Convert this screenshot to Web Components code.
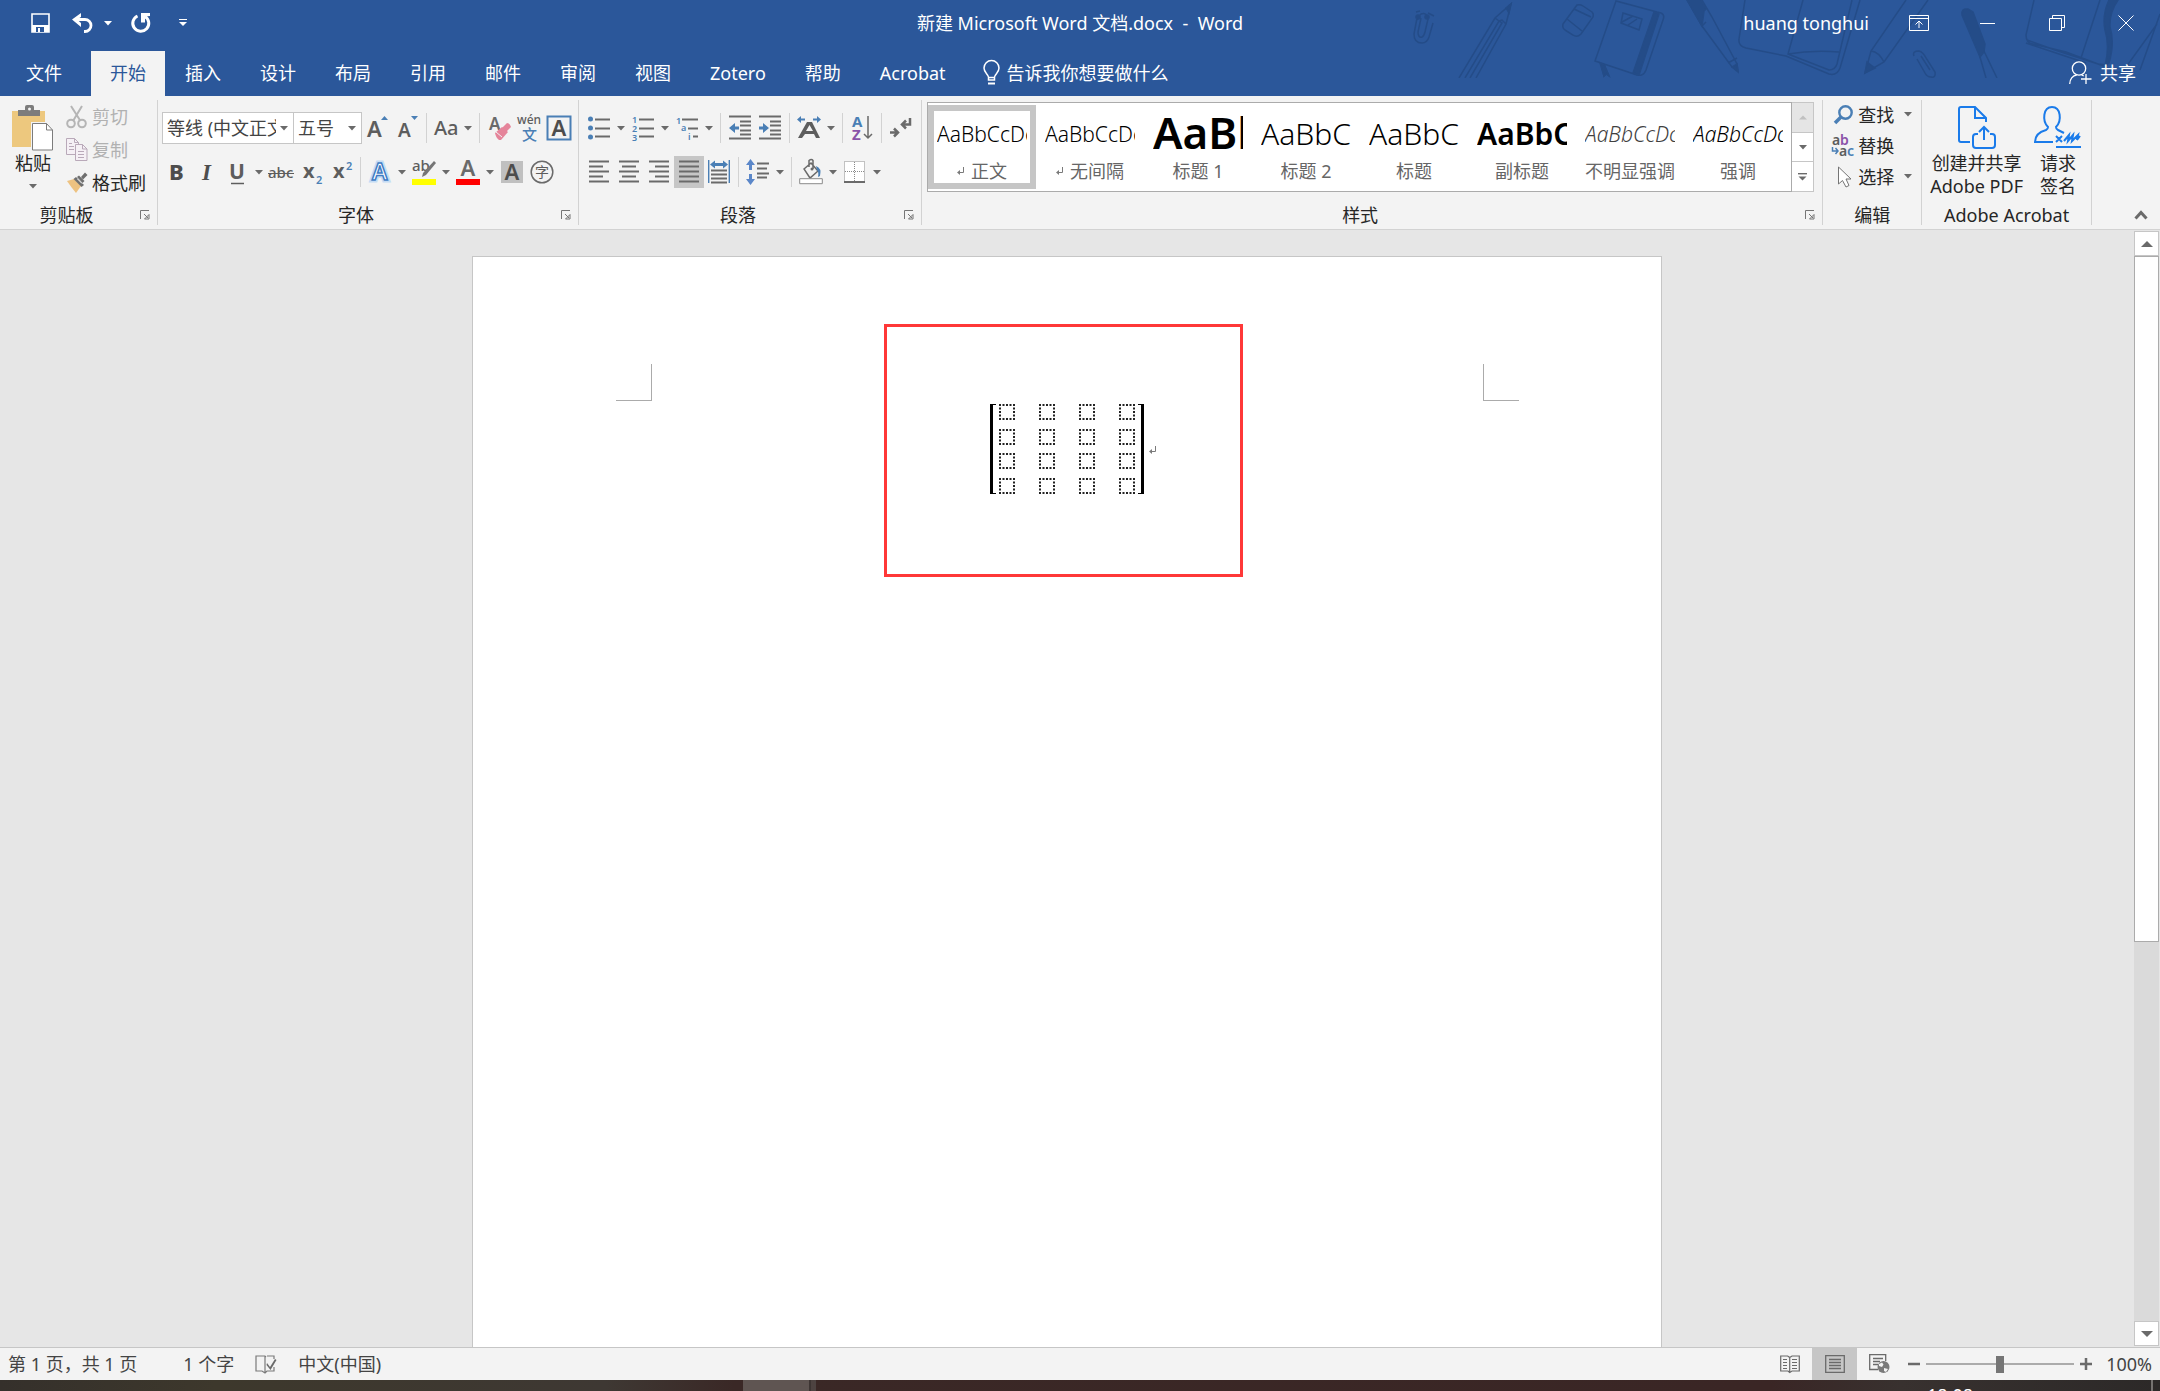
<!DOCTYPE html>
<html lang="zh-CN">
<head>
<meta charset="utf-8">
<title>新建 Microsoft Word 文档.docx - Word</title>
<style>
    body {
        margin: 0;
        font: 18px/24px "Noto Sans", "Noto Sans CJK SC", sans-serif;
        color: #262626;
    }
</style>
</head>
<body>
<word-app></word-app>

<script>
const INK = '#6a6a6a'
const BLUE = '#4a7fb5'

const lines = (rows) => rows.map(([x, y, w]) => `<path d="M${x} ${y + 0.5}h${w}" stroke="${INK}" stroke-width="2"/>`).join('')
const textAlign = (xs) => lines(xs.map(([x, w], i) => [x, i * 5, w]))

// name: [width, height, markup]
const ICONS = {
    caret: [8, 5, '<path d="M0 0h8L4 4.5z" fill="currentColor"/>'],
    save: [20, 20, '<path d="M1 1h17v18H1z" fill="none" stroke="#fff" stroke-width="1.6"/><path d="M1 12h17v7H1z" fill="#fff"/><path d="M5 14h8v5H5z" fill="#2b579a"/><path d="M7 15h2v4H7z" fill="#fff"/>'],
    undo: [23, 20, '<path d="M3 6.500h10a6 6 0 0 1 0 12h-1" fill="none" stroke="#fff" stroke-width="2.800"/><path d="M9 0v4L5 6.500l4 3.500v4L0 6.500z" fill="#fff"/>'],
    redo: [22, 20, '<path d="M7.500 3A8 8 0 1 0 15 3.500" fill="none" stroke="#fff" stroke-width="3"/><path d="M11 0h9v3l-5 .5v6h-4z" fill="#fff"/>'],
    more: [8, 8, '<path d="M0 .5h8" stroke="#fff"/><path d="M0 3h8L4 7z" fill="#fff"/>'],
    display: [20, 16, '<path d="M.5.5h19v15H.5zM.5 3.500h19M10 13V6M6.500 9.500 10 6l3.500 3.500" fill="none" stroke="#fff"/>'],
    minimize: [16, 16, '<path d="M0 8.500h15" stroke="#fff"/>'],
    restore: [16, 16, '<path d="M.5 3.500h12v12H.5zM3.500 3V.5h12v12H13" fill="none" stroke="#fff"/>'],
    close: [16, 16, '<path d="m.5.5 15 15m0-15-15 15" stroke="#fff"/>'],
    bulb: [18, 26, '<path d="M5.500 20v-3C5 14 1 12.500 1 8a7.500 7.500 0 0 1 15 0c0 4.500-4 6-4.500 9v3zM5.500 17.500h6" fill="none" stroke="#fff" stroke-width="1.500"/><path d="M5 23.500h7" stroke="#fff" stroke-width="2"/>'],
    share: [23, 24, '<circle cx="10" cy="7.500" r="6.700" fill="none" stroke="#fff" stroke-width="1.300"/><path d="M.7 23c0-5 3-8.500 7-9m5 0 2 .8M17 13v10m-5-5h10.500" fill="none" stroke="#fff" stroke-width="1.300"/>'],

    paste: [42, 46, '<path d="M0 6h33v36H0z" fill="#edc87e"/><path d="M6 5h7V2q0-2 2-2h5q2 0 2 2v3h6v6H6z" fill="#7c7c7c"/><circle cx="17.500" cy="4" r="1.500" fill="#f3f3f3"/><path d="M19 17h17l6 7v22H19z" fill="#f3f3f3"/><path d="M20.500 18.500h14l6 6.500v20h-20z" fill="#fff" stroke="#7c7c7c"/><path d="M34.500 18.500V25h6" fill="none" stroke="#7c7c7c"/>'],
    cut: [22, 24, '<g fill="none" stroke="#b5b5b5" stroke-width="2"><path d="m5 1 9.500 15M16 1 7 16"/><circle cx="5" cy="18.500" r="3.800"/><circle cx="16" cy="18.500" r="3.800"/></g>'],
    copy: [22, 24, '<g fill="#f5f0f5" stroke="#b9a9b9"><path d="M.5.5h8l4 4v12H.5z"/><path d="M9.500 6.500h7l4.500 4.500v11.500H9.500z"/><path d="M8.500.5v4h4m4 2V11h4.500M3 5.500h3M3 8.500h5M3 11.500h5m4 2h6m-6 3h6m-6 3h6" fill="none"/></g>'],
    brush: [22, 22, '<path d="m1 9 7-2 7 7-5 7q-5-6-9-12z" fill="#edc281"/><path d="m10 5 8 8-2.500 2L7.500 7zM15 5l4-4.500L21.500 3 17 7.500z" fill="#6f6f6f"/><path d="m13 3.500 5.500 5.500-2 2L11 5z" fill="#6f6f6f"/><path d="m11.500 7 4.500 4.500" stroke="#f3f3f3"/>'],

    grow: [22, 28, `<text x="1" y="23" font-size="22" font-weight="600" fill="#5d5d5d">A</text><path d="m15 6 3.500-4L22 6z" fill="${BLUE}"/>`],
    shrink: [22, 28, `<text x="2" y="23" font-size="19" font-weight="600" fill="#5d5d5d">A</text><path d="m15 2 3.500 4L22 2z" fill="${BLUE}"/>`],
    caseAa: [28, 26, '<text x="2" y="20" font-size="20" font-weight="500" fill="#5d5d5d">Aa</text>'],
    erase: [24, 26, '<text x="2" y="15" font-size="17" font-weight="600" fill="#6a6a6a">A</text><path d="m15 13 5-5q3 0 4 4l-6 6z" fill="#e5849a"/><path d="m8 18 7-6 6 5-7 8h-2q-3-2-4-7z" fill="#e5849a"/><path d="m9 17 6 5" stroke="#f3f3f3"/>'],
    phonetic: [24, 28, `<text x="0" y="10" font-size="12" font-weight="500" fill="#5d5d5d">wén</text><text x="5" y="26" font-size="15" font-weight="500" fill="${BLUE}">文</text>`],
    charBorder: [24, 24, `<path d="M.5.5h23v23H.5z" fill="none" stroke="${BLUE}" stroke-width="2"/><text x="12" y="20" text-anchor="middle" font-size="22" font-weight="600" fill="#4d4d4d">A</text>`],
    bold: [20, 24, '<text x="2" y="20" font-size="22" font-weight="800" fill="#4d4d4d">B</text>'],
    italic: [20, 24, '<text x="5" y="20" font-size="23" font-family="Liberation Serif, serif" font-weight="700" font-style="italic" fill="#4d4d4d">I</text>'],
    underline: [20, 26, '<text x="2" y="20" font-size="21" font-weight="700" fill="#5d5d5d">U</text><path d="M4 24.500h13" stroke="#5d5d5d" stroke-width="1.500"/>'],
    strike: [26, 24, '<text x="0" y="18" font-size="15" font-weight="500" fill="#5d5d5d">abc</text><path d="M0 13.500h26" stroke="#5d5d5d"/>'],
    sub: [24, 28, `<text x="4" y="20" font-size="20" font-weight="700" fill="#5d5d5d">x</text><text x="17" y="26" font-size="11" font-weight="600" fill="${BLUE}">2</text>`],
    sup: [24, 28, `<text x="4" y="20" font-size="20" font-weight="700" fill="#5d5d5d">x</text><text x="17" y="12" font-size="11" font-weight="600" fill="${BLUE}">2</text>`],
    effect: [22, 24, '<text x="3" y="20" font-size="23" font-weight="600" fill="#fff" stroke="#c5dcf4" stroke-width="5">A</text><text x="3" y="20" font-size="23" font-weight="600" fill="#fff" stroke="#3f7cc4" stroke-width="1.500">A</text>'],
    highlight: [24, 28, '<text x="0" y="13" font-size="15" font-weight="500" fill="#5d5d5d">ab</text><path d="m22 3 2 2-10 12-4 2 1-4z" fill="#757575"/><path d="M0 21h24v6H0z" fill="#ff0"/>'],
    fontColor: [24, 28, '<text x="12" y="18" text-anchor="middle" font-size="22" font-weight="600" fill="#6a6a6a">A</text><path d="M0 21h24v6H0z" fill="red"/>'],
    shade: [22, 22, '<path d="M0 0h22v22H0z" fill="#c0c0c0"/><text x="11" y="19" text-anchor="middle" font-size="22" font-weight="600" fill="#4d4d4d">A</text>'],
    circled: [24, 24, '<circle cx="12" cy="12" r="10.800" fill="none" stroke="#6a6a6a" stroke-width="1.500"/><text x="5" y="17" font-size="14" fill="#5d5d5d">字</text>'],

    bullets: [22, 22, [2, 11, 20].map(y => `<circle cx="2.500" cy="${y}" r="2.500" fill="${BLUE}"/>`).join('') + lines([[7, 2, 15], [7, 11, 15], [7, 19, 15]])],
    numbers: [22, 24, [1, 2, 3].map(n => `<text x="0" y="${n * 9 - 2}" font-size="9" font-weight="600" fill="${BLUE}">${n}</text>`).join('') + lines([[7, 3, 15], [7, 12, 15], [7, 20, 15]])],
    levels: [23, 24, `<g font-size="9" font-weight="600" fill="${BLUE}"><text x="0" y="8">1</text><text x="5" y="15">a</text><text x="12" y="24">i</text></g>` + lines([[6, 3, 16], [12, 12, 10], [17, 20, 5]])],
    outdent: [22, 24, lines([[0, 0, 22], [11, 5, 11], [11, 9, 11], [11, 14, 11], [11, 18, 11], [0, 22, 22]]) + `<path d="M0 12l6-5v3.500h4v3H6V17z" fill="${BLUE}"/>`],
    indent: [22, 24, lines([[0, 0, 22], [11, 5, 11], [11, 9, 11], [11, 14, 11], [11, 18, 11], [0, 22, 22]]) + `<path d="M10 12 4 7v3.500H0v3h4V17z" fill="${BLUE}"/>`],
    scale: [24, 24, `<path d="M0 3.500 4 0v2.500h4v2H4V7zM24 3.500 20 0v2.500h-4v2h4V7z" fill="${BLUE}"/><path d="M1 22 10 6h5l8 16h-4l-2-4H8l-3 4zm8-7h7l-3.500-6z" fill="#5d5d5d"/>`],
    sort: [20, 26, `<g font-size="15" font-weight="700"><text x="0" y="12" fill="${BLUE}">A</text><text x="0" y="25" fill="#8a52a8">Z</text></g><path d="M16 1v22m-4-4 4 4 4-4" fill="none" stroke="${INK}" stroke-width="1.500"/>`],
    marks: [22, 20, '<path d="M20 0v6.500h-8m4-4-4 4 4 4M0 14.500h8m-4-4 4 4-4 4" fill="none" stroke="#6a6a6a" stroke-width="2.500"/>'],
    left: [20, 22, textAlign([[0, 20], [0, 14], [0, 20], [0, 14], [0, 20]])],
    center: [20, 22, textAlign([[0, 20], [3, 14], [0, 20], [3, 14], [0, 20]])],
    right: [20, 22, textAlign([[0, 20], [6, 14], [0, 20], [6, 14], [0, 20]])],
    justify: [20, 22, textAlign([[0, 20], [0, 20], [0, 20], [0, 20], [0, 20]])],
    spread: [22, 24, `<path d="M.7 0v23M21.300 0v23" stroke="${BLUE}" stroke-width="1.400"/><path d="m2 4.500 5-4V3h8V.5l5 4-5 4V6H7v2.500z" fill="${BLUE}"/>` + lines([[3, 10, 16], [3, 14, 16], [3, 18, 16], [3, 22, 16]])],
    spacing: [24, 26, `<path d="m4.500 0 4.500 6H6v5H3V6H0zM4.500 26 0 20h3v-5h3v5h3z" fill="#5b87c9"/>` + lines([[11, 4, 12], [11, 9, 10], [11, 14, 12], [11, 18, 10]])],
    bucket: [24, 26, `<path d="m5 10 7-6 7 8-8 7zM10 8V1.500q2.500-2 4 0V10" fill="none" stroke="#6a6a6a" stroke-width="1.500"/><circle cx="13" cy="10" r="1.500" fill="#6a6a6a"/><path d="M17 7q6 2 4 10l-2 1q1-5-1-7z" fill="${BLUE}"/><path d="M.7 19.700h22.600v5H.7z" fill="#fff" stroke="#8a8a8a"/>`],
    borders: [22, 22, '<path d="M.5.5h20v20H.5zM10.500 1v20M1 10.500h20" fill="#fff" stroke="#8a8a8a" stroke-dasharray="1 1"/><path d="M0 21h21" stroke="#6a6a6a" stroke-width="2"/>'],

    returnMark: [8, 9, '<path d="M6.500 0v5.500H2" fill="none" stroke="#7a7a7a"/><path d="m0 5.500 3-2.500v5z" fill="#7a7a7a"/>'],
    find: [20, 20, `<circle cx="12.500" cy="7.500" r="6.200" fill="none" stroke="${BLUE}" stroke-width="2.400"/><path d="m8 12-6 6" stroke="${BLUE}" stroke-width="3.500"/>`],
    replace: [24, 24, `<g font-size="14" font-weight="600"><text x="1" y="11" fill="#5d5d5d">a</text><text x="9" y="11" fill="#8a52a8">b</text><text x="8" y="22" fill="#5d5d5d">a</text><text x="16" y="22" fill="${BLUE}">c</text></g><path d="M1.500 13v4H7m-2.500-3L7 17l-2.500 3" fill="none" stroke="${BLUE}" stroke-width="1.500"/>`],
    select: [20, 22, '<path d="M5.500 1v17l4-3.500 3.500 6.500 3-1.500-3-6.500h5z" fill="#fff" stroke="#757575"/>'],
    createPdf: [38, 44, '<g fill="none" stroke="#1a7bea" stroke-width="2"><path d="M12 36H3q-2 0-2-2V3q0-2 2-2h14l11 11v4M17 1v11h11M20 28h-2q-3 0-3 3v8q0 3 3 3h16q3 0 3-3v-8q0-3-3-3h-2M26 34V21m-5 5 5-5 5 5"/></g>'],
    sign: [48, 44, '<g fill="none" stroke="#1a7bea" stroke-width="2"><path d="M19 36H1q0-9 11-12 2-1 2-3c-6-6-5-20 4-20s10 14 4 20q0 2 2 3l6 3M22 30l6 6m0-6-6 6m8-1 5-6-1 6 5-6-1 6 6-6-1 5 3-4M22 41h25"/></g>'],
    launcher: [10, 10, '<path d="M.5 9V.5H9M4 4l4 4M9 4.500V9H4.500z" fill="none" stroke="#757575"/>'],
    collapse: [14, 10, '<path d="m1.500 8.500 5.500-6 5.500 6" fill="none" stroke="#6a6a6a" stroke-width="3"/>'],
    up: [12, 6, '<path d="m0 6 6-6 6 6z" fill="currentColor"/>'],
    down: [12, 6, '<path d="m0 0 6 6 6-6z" fill="currentColor"/>'],
    upSmall: [8, 5, '<path d="m0 4.500 4-4 4 4z" fill="currentColor"/>'],
    expand: [9, 8, '<path d="M0 .7h9" stroke="currentColor" stroke-width="1.400"/><path d="M.5 3.500h8l-4 4z" fill="currentColor"/>'],

    proof: [22, 20, '<path d="M10 2H1v15h6l3 2 2-2h7v-4M10 2v17M12 2h7v3M10 2l1 1" fill="none" stroke="#7a7a7a" stroke-width="1.200"/><path d="m12 9 3 4 5-8 1.500 1-6 10-4-5z" fill="#6a6a6a"/>'],
    read: [20, 18, '<path d="M.7 1h7l2 1.500L12 1h7.300v15H12l-2.300 1.500L8 16H.7zM9.700 2v16M3 4.500h4M3 7.500h4M3 10.500h4M3 13.500h4m5-9h5m-5 3h5m-5 3h5m-5 3h5" fill="none" stroke="#6a6a6a" stroke-width="1.200"/>'],
    print: [20, 18, '<path d="M.7.7h18.600v16.600H.7zM4 4.500h12M4 7.500h12M4 10.500h12M4 13.500h12" fill="none" stroke="#6a6a6a" stroke-width="1.300"/>'],
    web: [21, 20, '<path d="M9 15.500H.7V.7h16V7M4 4.500h10M4 7.500h7M4 10.500h5" fill="none" stroke="#6a6a6a" stroke-width="1.300"/><circle cx="14.500" cy="13" r="6" fill="#7a7a7a"/><path d="m10 10 3-1.500 1.500 2-1.500 2.500-3-1zm5 4 4 1-2 3-2-1z" fill="#f3f3f3"/>'],
    minus: [12, 12, '<path d="M0 6h12" stroke="#6a6a6a" stroke-width="2.500"/>'],
    plus: [12, 12, '<path d="M0 6h12M6 0v12" stroke="#6a6a6a" stroke-width="2.500"/>']
}

function define(name, html) {
    customElements.define(name, class extends HTMLElement {
        connectedCallback() {
            if (this.shadowRoot) return
            const shadow = this.attachShadow({ mode: 'open' })
            shadow.innerHTML = typeof html === 'function' ? html(this) : html
        }
    })
}

const resetButton = `
    button {
        margin: 0;
        padding: 0;
        border: 0;
        background: none;
        font: inherit;
        color: inherit;
    }
`

define('ui-icon', (el) => {
    const [w, h, body] = ICONS[el.getAttribute('name')]
    return `
        <style>
            :host { display: inline-flex; flex: none; }
            svg { display: block; overflow: visible; }
        </style>
        <svg width="${w}" height="${h}" viewBox="0 0 ${w} ${h}" aria-hidden="true">${body}</svg>
    `
})

// icon-only button of the ribbon, "menu" adds the drop-down arrow
define('tool-button', (el) => `
    <style>
        ${resetButton}
        :host { display: flex; height: 32px; }
        button { display: flex; align-items: center; justify-content: center; }
        .main { width: 30px; }
        .drop { width: 14px; color: #6a6a6a; }
        :host([active]) .main { background: #c6c6c6; }
    </style>
    <button class="main" aria-label="${el.getAttribute('label')}"><ui-icon name="${el.getAttribute('icon')}"></ui-icon></button>
    ${el.hasAttribute('menu') ? `<button class="drop" aria-label="${el.getAttribute('label')}选项"><ui-icon name="caret"></ui-icon></button>` : ''}
`)

define('tool-divider', `
    <style>
        :host { display: block; width: 1px; height: 30px; margin: 0 4px; background: #d2d2d2; }
    </style>
`)

// button with icon and caption on one line
define('text-button', (el) => `
    <style>
        ${resetButton}
        :host { display: block; }
        button { display: flex; align-items: center; gap: 4px; height: 100%; white-space: nowrap; }
        button:disabled { color: #b1b1b1; }
        .icon { display: flex; width: 22px; justify-content: center; }
        .caret { margin-left: 6px; color: #6a6a6a; }
    </style>
    <button ${el.hasAttribute('disabled') ? 'disabled' : ''}>
        <span class="icon"><ui-icon name="${el.getAttribute('icon')}"></ui-icon></span>
        <slot></slot>
        ${el.hasAttribute('menu') ? '<ui-icon class="caret" name="caret"></ui-icon>' : ''}
    </button>
`)

define('big-button', (el) => `
    <style>
        ${resetButton}
        :host { display: block; }
        button { display: flex; flex-direction: column; align-items: center; gap: 1px; min-width: 50px; line-height: 23px; white-space: nowrap; }
        ui-icon { height: 46px; align-items: center; }
        .caret { height: 20px; color: #6a6a6a; }
    </style>
    <button>
        <ui-icon name="${el.getAttribute('icon')}"></ui-icon>
        <span><slot></slot></span>
        ${el.hasAttribute('menu') ? '<ui-icon class="caret" name="caret"></ui-icon>' : ''}
    </button>
`)

define('combo-box', (el) => `
    <style>
        :host {
            display: flex;
            align-items: center;
            box-sizing: border-box;
            height: 32px;
            padding: 0 5px 0 4px;
            border: 1px solid #c6c6c6;
            background: #fff;
        }
        select {
            flex: 1;
            min-width: 0;
            padding: 0;
            margin-right: 4px;
            border: 0;
            background: none;
            appearance: none;
            font: inherit;
            color: #444;
            text-overflow: clip;
        }
        ui-icon { color: #6a6a6a; }
    </style>
    <select aria-label="${el.getAttribute('label')}"><option>${el.getAttribute('value')}</option></select>
    <ui-icon name="caret"></ui-icon>
`)

define('ribbon-group', (el) => `
    <style>
        ${resetButton}
        :host {
            display: flex;
            flex-direction: column;
            box-sizing: border-box;
            border-right: 1px solid #d2d2d2;
        }
        .body { flex: 1; }
        footer { display: flex; align-items: center; height: 20px; }
        .name { flex: 1; text-align: center; white-space: nowrap; }
        button { display: flex; align-items: center; justify-content: center; width: 24px; height: 20px; }
    </style>
    <div class="body"><slot></slot></div>
    <footer>
        <span class="name">${el.getAttribute('name')}</span>
        ${el.hasAttribute('launcher') ? `<button aria-label="${el.getAttribute('name')}设置"><ui-icon name="launcher"></ui-icon></button>` : ''}
    </footer>
`)

define('style-cell', (el) => `
    <style>
        ${resetButton}
        :host { display: block; flex: none; width: 108px; }
        button {
            display: flex;
            flex-direction: column;
            gap: 2px;
            box-sizing: border-box;
            width: 100%;
            height: 84px;
            padding: 0 3px;
            border: 6px solid transparent;
        }
        :host([active]) button { border-color: #c6c6c6; }
        .preview {
            width: 90px;
            height: 46px;
            overflow: hidden;
            color: #000;
            font-size: 21px;
            font-weight: 300;
            line-height: 46px;
            text-align: left;
            white-space: nowrap;
        }
        .h1 { font-size: 44px; font-weight: 600; line-height: 42px; }
        .h2 { font-size: 30px; }
        .sub { font-size: 30px; font-weight: 600; }
        .em { font-style: italic; }
        .soft { font-style: italic; color: #404040; }
        .name {
            display: flex;
            align-items: center;
            justify-content: center;
            gap: 6px;
            width: 90px;
            color: #666;
            white-space: nowrap;
        }
    </style>
    <button>
        <span class="preview ${el.getAttribute('kind') || ''}">${el.getAttribute('sample')}</span>
        <span class="name">${el.hasAttribute('mark') ? '<ui-icon name="returnMark"></ui-icon>' : ''}<slot></slot></span>
    </button>
`)

define('style-gallery', `
    <style>
        ${resetButton}
        :host { display: flex; height: 90px; }
        .cells {
            display: flex;
            flex: 1;
            box-sizing: border-box;
            min-width: 0;
            overflow: hidden;
            padding: 2px 0;
            border: 1px solid #ababab;
            background: #fff;
        }
        .more { display: flex; flex-direction: column; width: 22px; }
        .more button {
            display: flex;
            flex: 1;
            align-items: center;
            justify-content: center;
            border: solid #c6c6c6;
            border-width: 1px 1px 0 0;
            background: #fff;
            color: #6a6a6a;
        }
        .more button:disabled { background: #e5e5e5; color: #c0c0c0; }
        .more button:last-child { border-bottom-width: 1px; }
    </style>
    <div class="cells"><slot></slot></div>
    <div class="more">
        <button disabled aria-label="上一行"><ui-icon name="upSmall"></ui-icon></button>
        <button aria-label="下一行"><ui-icon name="caret"></ui-icon></button>
        <button aria-label="其他"><ui-icon name="expand"></ui-icon></button>
    </div>
`)

define('header-art', `
    <style>
        :host { position: absolute; top: 0; right: 0; }
        svg { display: block; }
    </style>
    <svg width="760" height="78" viewBox="0 0 760 78" fill="none" stroke="#244c88" stroke-width="1.500" aria-hidden="true">
        <path d="M17 18 14 34q0 9 8 9 5 0 7-6l4-14M21 18l-3 14q0 6 4 5 2-1 3-5l3-13q-1-7-7-5-3 2-4 6M16 12l4-1m8 2 6 3"/>
        <circle cx="18" cy="17" r="2" fill="#244c88"/><circle cx="27" cy="17" r="2" fill="#244c88"/>
        <path d="m59 78 36-60 16-14-5 20-30 54M65 78l34-57 3 2-32 55M95 18l4 3 3-1 4 4"/>
        <path d="m106 8 5-4-2 9z" fill="#244c88"/>
        <path d="m163 24 14-19q3-1 6 1l9 6q2 2 1 5l-12 17q-4 4-8 1l-8-5q-3-2-2-6zm4-5 15 12M174 9l17 8"/>
        <path d="M216 1 195 61l39 13q9 4 12-4l17-50q3-7-6-8zM195 61l6 2 3 13 3-3 2 3-5-12M223 13l19 6-3 11-18-7zm-1 9 11-6m-5 9 9-6"/>
        <path d="m254 12 5 2-20 61-6-2zM200 63l4 2 5 11-3-2-2 2z" fill="#244c88"/>
        <path d="m287 0 15 26 30 41 6 4-1-7-25-47L302 0M302 26l4-4m22 41 9-5"/>
        <path d="m287 0 15 26 2-15 2-2-5-9zM332 67l6 5-1-8z" fill="#244c88"/>
        <path d="m345 0-6 39q-1 7 7 9l40 8 43 18q8 2 11-6L460 0M403 0l-15 54 41 16q6 0 8-6L452 0M388 54q24-4 51-2"/>
        <path d="m506 0-35 51-6 22 19-11L528 0M471 51q8 1 13 11"/>
        <path d="m467 62-2 11 10-5z" fill="#244c88"/>
        <path d="M514 56q-2-5 5-5 4 1 7 7l9 14q1 6-4 5-4 0-6-4l-8-14m4-3 9 14"/>
        <path d="m580 57 6 21m11 0-15-31"/>
        <path d="M562 15q-1-7 6-6l5 3 12 32-1 8-4 5z" fill="#244c88"/>
        <path d="m634 0-8 35q0 8 7 9l33 8 40 15q6 4 10 5 8 1 10-5L757 24M700 0l-19 58M627 40l28 10 43 14 10 1M626 43l30 10 30 10M760 14l-20 56"/>
        <path d="M709 0q-7 15-4 30 5 16 0 36l4-3q6-20 1-36-1-14 8-27z" fill="#244c88"/>
    </svg>
`)

define('title-bar', `
    <style>
        ${resetButton}
        :host {
            position: relative;
            display: grid;
            grid-template-columns: 1fr auto 1fr;
            align-items: center;
            height: 46px;
            padding-bottom: 5px;
            color: #fff;
        }
        button { display: flex; align-items: center; justify-content: center; height: 46px; }
        .quick { display: flex; gap: 8px; padding-left: 24px; }
        .quick button { width: 34px; }
        .split { display: flex; }
        .split .drop { width: 16px; }
        h1 { margin: 0; font: inherit; white-space: pre; }
        .window { display: flex; justify-content: flex-end; align-items: center; }
        .user { padding: 0 15px; }
        .window .control { width: 69px; }
    </style>
    <div class="quick">
        <button aria-label="保存"><ui-icon name="save"></ui-icon></button>
        <div class="split">
            <button aria-label="撤消"><ui-icon name="undo"></ui-icon></button>
            <button class="drop" aria-label="撤消选项"><ui-icon name="caret"></ui-icon></button>
        </div>
        <button aria-label="重复"><ui-icon name="redo"></ui-icon></button>
        <button aria-label="自定义快速访问工具栏"><ui-icon name="more"></ui-icon></button>
    </div>
    <h1>新建 Microsoft Word 文档.docx  -  Word</h1>
    <div class="window">
        <button class="user">huang tonghui</button>
        <button class="control" aria-label="功能区显示选项"><ui-icon name="display"></ui-icon></button>
        <button class="control" aria-label="最小化"><ui-icon name="minimize"></ui-icon></button>
        <button class="control" aria-label="向下还原"><ui-icon name="restore"></ui-icon></button>
        <button class="control" aria-label="关闭"><ui-icon name="close"></ui-icon></button>
    </div>
`)

define('ribbon-tabs', `
    <style>
        ${resetButton}
        :host { position: relative; display: flex; gap: 1px; height: 45px; color: #fff; }
        button { padding: 0 19px 2px; white-space: nowrap; }
        .file { padding: 0 28px 2px 26px; }
        .active { background: #f3f3f3; color: #2b579a; }
        .tell { display: flex; align-items: center; gap: 6px; padding: 0 17px 2px; }
        .share { display: flex; align-items: center; gap: 8px; margin-left: auto; padding: 0 24px 2px; }
    </style>
    <button class="file">文件</button>
    <button class="active">开始</button>
    <button>插入</button>
    <button>设计</button>
    <button>布局</button>
    <button>引用</button>
    <button>邮件</button>
    <button>审阅</button>
    <button>视图</button>
    <button>Zotero</button>
    <button>帮助</button>
    <button>Acrobat</button>
    <button class="tell"><ui-icon name="bulb"></ui-icon>告诉我你想要做什么</button>
    <button class="share"><ui-icon name="share"></ui-icon>共享</button>
`)

define('word-ribbon', `
    <style>
        ${resetButton}
        :host {
            display: flex;
            box-sizing: border-box;
            height: 134px;
            padding: 4px 0;
            border-bottom: 1px solid #d2d2d2;
            background: #f3f3f3;
        }
        .rows { display: flex; flex-direction: column; gap: 12px; padding: 12px 4px 0; }
        .paragraph { padding: 12px 5px 0; }
        .row { display: flex; align-items: center; }
        .face { width: 132px; }
        .size { width: 69px; margin-left: -1px; }
        .clipboard { display: flex; gap: 8px; padding: 5px 11px 0 8px; }
        .list { display: flex; flex-direction: column; margin-top: -1px; }
        .clipboard text-button { height: 33px; }
        .clipboard .list { margin-top: -5px; }
        .styles { flex: 1; min-width: 0; }
        style-gallery { margin: 2px 8px 0 5px; }
        .editing { padding: 0 9px; }
        .editing text-button { height: 31px; }
        .acrobat { display: flex; gap: 10px; padding: 5px 8px 0; }
        .end { display: flex; align-items: flex-end; justify-content: flex-end; width: 68px; }
        .end button { padding: 0 12px; }
    </style>
    <ribbon-group name="剪贴板" launcher>
        <div class="clipboard">
            <big-button icon="paste" menu>粘贴</big-button>
            <div class="list">
                <text-button icon="cut" disabled>剪切</text-button>
                <text-button icon="copy" disabled>复制</text-button>
                <text-button icon="brush">格式刷</text-button>
            </div>
        </div>
    </ribbon-group>
    <ribbon-group name="字体" launcher>
        <div class="rows">
            <div class="row">
                <combo-box class="face" label="字体" value="等线 (中文正文)"></combo-box>
                <combo-box class="size" label="字号" value="五号"></combo-box>
                <tool-button icon="grow" label="增大字号"></tool-button>
                <tool-button icon="shrink" label="减小字号"></tool-button>
                <tool-divider></tool-divider>
                <tool-button icon="caseAa" label="更改大小写" menu></tool-button>
                <tool-divider></tool-divider>
                <tool-button icon="erase" label="清除格式"></tool-button>
                <tool-button icon="phonetic" label="拼音指南"></tool-button>
                <tool-button icon="charBorder" label="字符边框"></tool-button>
            </div>
            <div class="row">
                <tool-button icon="bold" label="加粗"></tool-button>
                <tool-button icon="italic" label="倾斜"></tool-button>
                <tool-button icon="underline" label="下划线" menu></tool-button>
                <tool-button icon="strike" label="删除线"></tool-button>
                <tool-button icon="sub" label="下标"></tool-button>
                <tool-button icon="sup" label="上标"></tool-button>
                <tool-divider></tool-divider>
                <tool-button icon="effect" label="文本效果" menu></tool-button>
                <tool-button icon="highlight" label="突出显示" menu></tool-button>
                <tool-button icon="fontColor" label="字体颜色" menu></tool-button>
                <tool-button icon="shade" label="字符底纹"></tool-button>
                <tool-button icon="circled" label="带圈字符"></tool-button>
            </div>
        </div>
    </ribbon-group>
    <ribbon-group name="段落" launcher>
        <div class="rows paragraph">
            <div class="row">
                <tool-button icon="bullets" label="项目符号" menu></tool-button>
                <tool-button icon="numbers" label="编号" menu></tool-button>
                <tool-button icon="levels" label="多级列表" menu></tool-button>
                <tool-divider></tool-divider>
                <tool-button icon="outdent" label="减少缩进量"></tool-button>
                <tool-button icon="indent" label="增加缩进量"></tool-button>
                <tool-divider></tool-divider>
                <tool-button icon="scale" label="中文版式" menu></tool-button>
                <tool-divider></tool-divider>
                <tool-button icon="sort" label="排序"></tool-button>
                <tool-divider></tool-divider>
                <tool-button icon="marks" label="显示编辑标记"></tool-button>
            </div>
            <div class="row">
                <tool-button icon="left" label="左对齐"></tool-button>
                <tool-button icon="center" label="居中"></tool-button>
                <tool-button icon="right" label="右对齐"></tool-button>
                <tool-button icon="justify" label="两端对齐" active></tool-button>
                <tool-button icon="spread" label="分散对齐"></tool-button>
                <tool-divider></tool-divider>
                <tool-button icon="spacing" label="行和段落间距" menu></tool-button>
                <tool-divider></tool-divider>
                <tool-button icon="bucket" label="底纹" menu></tool-button>
                <tool-button icon="borders" label="边框" menu></tool-button>
            </div>
        </div>
    </ribbon-group>
    <ribbon-group class="styles" name="样式" launcher>
        <style-gallery>
            <style-cell sample="AaBbCcDc" mark active>正文</style-cell>
            <style-cell sample="AaBbCcDc" mark>无间隔</style-cell>
            <style-cell sample="AaBb" kind="h1">标题 1</style-cell>
            <style-cell sample="AaBbC" kind="h2">标题 2</style-cell>
            <style-cell sample="AaBbC" kind="h2">标题</style-cell>
            <style-cell sample="AaBbC" kind="sub">副标题</style-cell>
            <style-cell sample="AaBbCcDc" kind="soft">不明显强调</style-cell>
            <style-cell sample="AaBbCcDc" kind="em">强调</style-cell>
        </style-gallery>
    </ribbon-group>
    <ribbon-group name="编辑">
        <div class="editing list">
            <text-button icon="find" menu>查找</text-button>
            <text-button icon="replace">替换</text-button>
            <text-button icon="select" menu>选择</text-button>
        </div>
    </ribbon-group>
    <ribbon-group name="Adobe Acrobat">
        <div class="acrobat">
            <big-button icon="createPdf">创建并共享<br>Adobe PDF</big-button>
            <big-button icon="sign">请求<br>签名</big-button>
        </div>
    </ribbon-group>
    <div class="end"><button aria-label="折叠功能区"><ui-icon name="collapse"></ui-icon></button></div>
`)

define('matrix-equation', (el) => {
    const size = Number(el.getAttribute('size'))
    return `
    <style>
        :host { position: relative; display: block; }
        .matrix {
            display: grid;
            grid-template-columns: repeat(${size}, 16px);
            column-gap: 24px;
            padding: 0 9px;
            height: 90px;
            align-content: space-between;
            /* square brackets: heavy stem plus short serifs */
            background:
                linear-gradient(#000, #000) left / 3px 100%,
                linear-gradient(#000, #000) right / 3px 100%,
                linear-gradient(#000, #000) left top / 6px 1px,
                linear-gradient(#000, #000) left bottom / 6px 1px,
                linear-gradient(#000, #000) right top / 6px 1px,
                linear-gradient(#000, #000) right bottom / 6px 1px;
            background-repeat: no-repeat;
        }
        svg { display: block; }
        .mark { position: absolute; left: calc(100% + 5px); top: 42px; }
    </style>
    <div class="matrix">
        ${'<svg width="16" height="16"><path d="M0 1h16M0 15h16M1 0v16M15 0v16" stroke="#222" stroke-width="2" stroke-dasharray="2 1.500"/></svg>'.repeat(size * size)}
    </div>
    <ui-icon class="mark" name="returnMark"></ui-icon>
`
})

define('document-page', `
    <style>
        :host {
            display: flex;
            flex-direction: column;
            box-sizing: border-box;
            flex: none;
            width: 1190px;
            border: solid #c6c6c6;
            border-width: 1px 1px 0;
            background: #fff;
        }
        .corners { display: flex; justify-content: space-between; padding: 107px 142px 0 143px; }
        .corners i { box-sizing: border-box; width: 36px; height: 37px; border: solid #ababab; border-width: 0 0 1px; }
        .corners i:first-child { border-right-width: 1px; }
        .corners i:last-child { border-left-width: 1px; }
        .line { display: flex; justify-content: center; margin-top: 3px; }
        .frame {
            position: absolute;
            left: 50%;
            top: 94px;
            box-sizing: border-box;
            width: 359px;
            height: 253px;
            margin-left: -183px;
            border: 3px solid #ff3838;
        }
    </style>
    <div class="corners"><i></i><i></i></div>
    <div class="line"><slot></slot></div>
    <div class="frame"></div>
`)

define('scroll-bar', `
    <style>
        ${resetButton}
        :host {
            display: flex;
            flex-direction: column;
            box-sizing: border-box;
            width: 26px;
            padding: 1px 1px 1px 0;
            background: linear-gradient(#dadada, #dadada) content-box;
        }
        button {
            display: flex;
            align-items: center;
            justify-content: center;
            box-sizing: border-box;
            height: 25px;
            border: 1px solid #c6c6c6;
            background: #fff;
            color: #6a6a6a;
        }
        .track { flex: 1; }
        .thumb { box-sizing: border-box; height: 64.4%; border: 1px solid #ababab; background: #fff; }
    </style>
    <button aria-label="向上滚动"><ui-icon name="up"></ui-icon></button>
    <div class="track"><div class="thumb"></div></div>
    <button aria-label="向下滚动"><ui-icon name="down"></ui-icon></button>
`)

define('status-bar', `
    <style>
        ${resetButton}
        :host {
            display: flex;
            align-items: stretch;
            box-sizing: border-box;
            height: 33px;
            padding: 0 8px;
            border-top: 1px solid #c6c6c6;
            background: #f3f3f3;
            color: #444;
        }
        button { display: flex; align-items: center; justify-content: center; white-space: pre; }
        .info { display: flex; }
        .words { margin-left: 46px; }
        .proof { width: 64px; }
        .views { display: flex; margin-left: auto; }
        .views button { width: 45px; }
        .views .active { background: #c6c6c6; }
        .zoom { display: flex; align-items: center; }
        .zoom button { width: 24px; }
        .zoom .percent { width: auto; margin-left: 8px; }
        input {
            width: 148px;
            height: 20px;
            margin: 0;
            appearance: none;
            background: linear-gradient(#ababab, #ababab) center / 100% 2px no-repeat;
        }
        input::-webkit-slider-thumb { appearance: none; width: 8px; height: 17px; background: #757575; }
    </style>
    <div class="info">
        <button>第 1 页，共 1 页</button>
        <button class="words">1 个字</button>
        <button class="proof" aria-label="校对"><ui-icon name="proof"></ui-icon></button>
        <button>中文(中国)</button>
    </div>
    <div class="views">
        <button aria-label="阅读视图"><ui-icon name="read"></ui-icon></button>
        <button class="active" aria-label="页面视图"><ui-icon name="print"></ui-icon></button>
        <button aria-label="Web 版式视图"><ui-icon name="web"></ui-icon></button>
    </div>
    <div class="zoom">
        <button aria-label="缩小"><ui-icon name="minus"></ui-icon></button>
        <input type="range" min="0" max="100" value="50" aria-label="显示比例">
        <button aria-label="放大"><ui-icon name="plus"></ui-icon></button>
        <button class="percent">100%</button>
    </div>
`)

define('task-bar', `
    <style>
        :host {
            display: flex;
            height: 11px;
            overflow: hidden;
            background: linear-gradient(90deg, #35302b, #3d382c 10%, #3e3833 28%, #3a2826 34%, #3a2625 82%, #38312f 88%, #2c2928);
            color: #fff;
        }
        .app { width: 66px; margin-left: 743px; border-right: 2px solid #3d3533; background: #5f5552; }
        .next { width: 5px; background: #4d4341; }
        .clock { margin: 3px 167px 0 auto; width: 68px; text-align: center; }
        .desktop { width: 7px; border-left: 2px solid #757270; }
    </style>
    <div class="app"></div>
    <div class="next"></div>
    <div class="clock">18:08</div>
    <div class="desktop"></div>
`)

define('word-app', `
    <style>
        :host { display: flex; flex-direction: column; height: 100vh; overflow: hidden; }
        header { position: relative; background: #2b579a; }
        main { display: flex; flex: 1; min-height: 0; background: #e6e6e6; }
        .canvas { position: relative; display: flex; flex: 1; justify-content: center; overflow: hidden; padding-top: 26px; }
    </style>
    <header>
        <header-art></header-art>
        <title-bar></title-bar>
        <ribbon-tabs></ribbon-tabs>
    </header>
    <word-ribbon></word-ribbon>
    <main>
        <div class="canvas">
            <document-page><matrix-equation size="4"></matrix-equation></document-page>
        </div>
        <scroll-bar></scroll-bar>
    </main>
    <status-bar></status-bar>
    <task-bar></task-bar>
`)
</script>
</body>
</html>
